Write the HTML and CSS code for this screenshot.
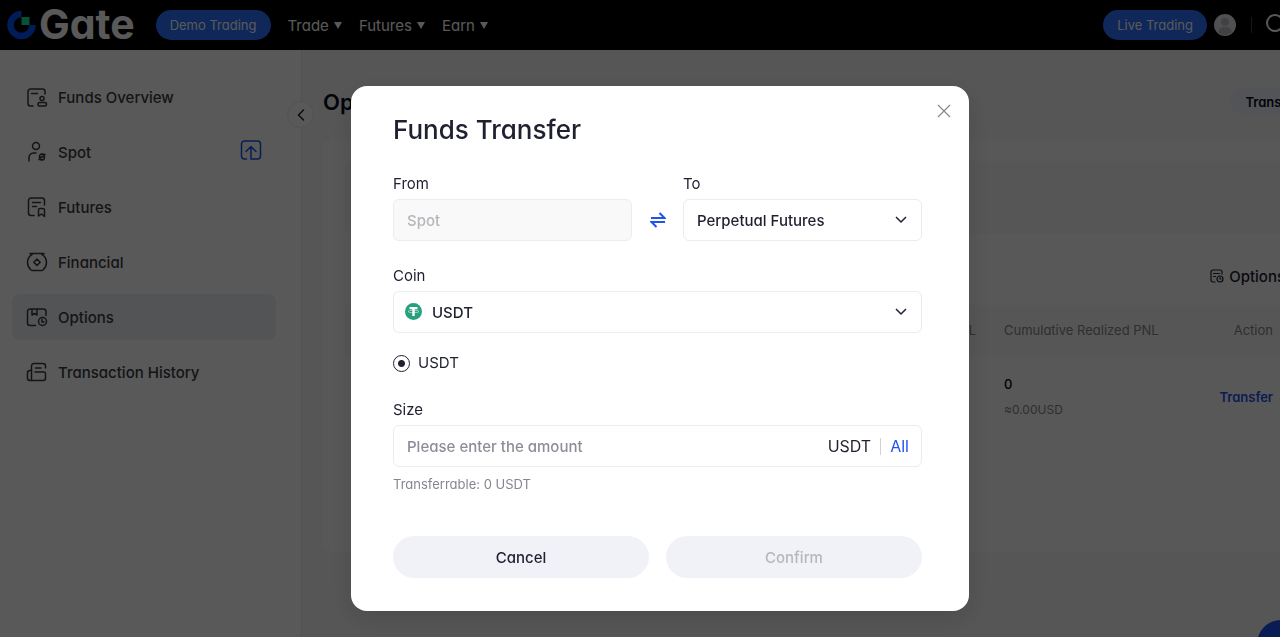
FILE: index.html
```html
<!DOCTYPE html>
<html lang="en">
<head>
  <meta charset="UTF-8">
  <meta name="viewport" content="width=device-width, initial-scale=1.0">
  <title>Options - Gate</title>
  <link rel="stylesheet" href="styles.css">
</head>
<body>
  <div class="page">
    <header class="header">
      <a href="#" class="logo">
        <svg width="29" height="30" viewBox="0 0 29 30">
          <path d="M14.5 4a11 11 0 1 0 11 11" fill="none" stroke="#0055ff" stroke-width="6.5"/>
          <rect x="14.5" y="7" width="8" height="8" fill="#17e5a1"/>
        </svg>
        <span>Gate</span>
      </a>
      <button class="pill">Demo Trading</button>
      <nav class="nav">
        <a href="#">Trade <i class="caret"></i></a>
        <a href="#">Futures <i class="caret"></i></a>
        <a href="#">Earn <i class="caret"></i></a>
      </nav>
      <div class="header-right">
        <button class="pill">Live Trading</button>
        <svg class="avatar" width="22" height="22" viewBox="0 0 22 22">
          <circle cx="11" cy="11" r="11" fill="#e4e6ea"/>
          <circle cx="11" cy="8" r="4" fill="#b9bcc2"/>
          <path d="M4 18c1-4 3-5 7-5s6 1 7 5c-3 4-11 4-14 0z" fill="#b9bcc2"/>
        </svg>
        <span class="divider"></span>
        <svg class="search" width="24" height="24" viewBox="0 0 24 24" fill="none" stroke="#fff" stroke-width="2">
          <circle cx="10" cy="10" r="8"/>
          <path d="M16 16l6 6"/>
        </svg>
      </div>
    </header>

    <div class="body">
      <!-- Sidebar -->
      <aside class="sidebar">
        <a href="#" class="menu-item">
          <svg class="icon" viewBox="0 0 22 22">
            <path d="M7 20H4.500a2.500 2.500 0 0 1-2.500-2.500v-12A2.500 2.500 0 0 1 4.500 3h12A2.500 2.500 0 0 1 19 5.500V8M5.500 7.500h6"/>
            <circle cx="16" cy="12.500" r="2"/>
            <rect x="12" y="16.500" width="8.500" height="3.500" rx="1.500"/>
          </svg>
          <span>Funds Overview</span>
        </a>
        <a href="#" class="menu-item">
          <svg class="icon" viewBox="0 0 22 22">
            <circle cx="10" cy="5" r="3.500"/>
            <path d="M3 20v-3.500A4.500 4.500 0 0 1 7.500 12H10"/>
            <ellipse cx="16" cy="16" rx="2.500" ry="3"/>
            <path d="M13 18.500h3.500M15.500 13.500H19M14.500 16.500l3-1"/>
          </svg>
          <span>Spot</span>
          <svg class="upload" width="22" height="22" viewBox="0 0 22 22">
            <path d="M6.500 20H4.500a3 3 0 0 1-3-3V5a3 3 0 0 1 3-3h13a3 3 0 0 1 3 3v12a3 3 0 0 1-3 3H11V8M6 12.500l5-5 5 5"/>
          </svg>
        </a>
        <a href="#" class="menu-item">
          <svg class="icon" viewBox="0 0 22 22">
            <path d="M8 19.500H5A2.500 2.500 0 0 1 2.500 17V4.500A2.500 2.500 0 0 1 5 2h11a2.500 2.500 0 0 1 2.500 2.500V9M6.500 6.500h8M6.500 10.500h4M12.500 20v-6a1.500 1.500 0 0 1 1.500-1.500h3a1.500 1.500 0 0 1 1.500 1.500v6.500l-3-2.500z"/>
          </svg>
          <span>Futures</span>
        </a>
        <a href="#" class="menu-item">
          <svg class="icon" viewBox="0 0 22 22">
            <path d="M4 2.500h14M6.500 3C4 4.500 1.500 8 1.500 11.500c0 3 1.500 5.500 3.500 7.500q.5.500 1.500.500h9q1 0 1.500-.5c2-2 3.500-4.500 3.500-7.500C20.500 8 18 4.500 15.500 3M11 8l3.200 3.200L11 14.400l-3.200-3.200z"/>
          </svg>
          <span>Financial</span>
        </a>
        <a href="#" class="menu-item active">
          <svg class="icon" viewBox="0 0 22 22">
            <path d="M9.500 19.500H4A2.500 2.500 0 0 1 1.500 17V5.500A2.500 2.500 0 0 1 4 3h13.500A2.500 2.500 0 0 1 20 5.500V9.500M6 3v6l2.500-1.500L11 9V3"/>
            <circle cx="16.500" cy="15.500" r="4"/>
            <path d="M16 13.500v2.500h2"/>
          </svg>
          <span>Options</span>
        </a>
        <a href="#" class="menu-item">
          <svg class="icon" viewBox="0 0 22 22">
            <path d="M5.500 19V5A2.500 2.500 0 0 1 8 2.500h9A2.500 2.500 0 0 1 19.500 5v2M5.500 9.500H4A2.500 2.500 0 0 0 1.500 12v5A2.500 2.500 0 0 0 4 19.500h13a2.500 2.500 0 0 0 2.500-2.500v-4.500A1.500 1.500 0 0 0 18 11H9M9.500 7h5.500"/>
          </svg>
          <span>Transaction History</span>
        </a>
        <button class="collapse" aria-label="Collapse menu">
          <svg width="12" height="12" viewBox="0 0 12 12"><path d="M8.500 1L3.500 6l5 5"/></svg>
        </button>
      </aside>

      <!-- Options account -->
      <main class="main">
        <div class="title-row">
          <h1>Options</h1>
          <button class="transfer-btn">Transfer</button>
        </div>
        <section class="card">
          <div class="summary"></div>
          <div class="card-head">
            <svg class="icon-small" viewBox="0 0 14 14">
              <path d="M5 13H3a2 2 0 0 1-2-2V3a2 2 0 0 1 2-2h7a2 2 0 0 1 2 2v2M3.500 4.500h6M3.500 7.500h2"/>
              <circle cx="10" cy="10" r="3"/>
              <path d="M10 8.500V10h1"/>
            </svg>
            <a href="#">Options</a>
          </div>
          <table class="assets">
            <thead>
              <tr><th class="pnl">PNL</th><th class="realized">Cumulative Realized PNL</th><th class="action">Action</th></tr>
            </thead>
            <tbody>
              <tr>
                <td></td>
                <td class="realized"><b>0</b><small>≈0.00USD</small></td>
                <td class="action"><a href="#">Transfer</a></td>
              </tr>
            </tbody>
          </table>
        </section>
      </main>
    </div>

    <button class="chat" aria-label="Support"></button>

    <!-- Transfer dialog -->
    <div class="overlay">
      <form class="dialog" role="dialog" aria-labelledby="dialog-title">
        <button type="button" class="close" aria-label="Close">
          <svg width="14" height="14" viewBox="0 0 14 14"><path d="M1 1l12 12M13 1L1 13"/></svg>
        </button>
        <h2 id="dialog-title">Funds Transfer</h2>

        <div class="accounts">
          <div class="form-group">
            <label for="from">From</label>
            <input type="text" id="from" class="field" value="Spot" disabled>
          </div>
          <button type="button" class="swap" aria-label="Swap accounts">
            <svg width="16" height="16" viewBox="0 0 16 16"><path d="M1 6h13.500L9.500 1M15 10H1.500l5 5"/></svg>
          </button>
          <div class="form-group">
            <label for="to">To</label>
            <div class="select">
              <select id="to" class="field"><option>Perpetual Futures</option></select>
              <svg class="chevron" width="12" height="8" viewBox="0 0 12 8"><path d="M1 1l5 5 5-5"/></svg>
            </div>
          </div>
        </div>

        <div class="form-group">
          <label for="coin">Coin</label>
          <div class="select">
            <svg class="coin-icon" width="17" height="17" viewBox="0 0 17 17">
              <circle cx="8.500" cy="8.500" r="8.500" fill="#26a17b"/>
              <path d="M4.500 4h8v2.200H9.700V13H7.300V6.200H4.500z" fill="#fff"/>
              <ellipse cx="8.500" cy="8.500" rx="5.500" ry="1.200" fill="none" stroke="#fff" stroke-width=".5"/>
            </svg>
            <select id="coin" class="field coin"><option>USDT</option></select>
            <svg class="chevron" width="12" height="8" viewBox="0 0 12 8"><path d="M1 1l5 5 5-5"/></svg>
          </div>
        </div>

        <label class="radio"><input type="radio" name="unit" checked>USDT</label>

        <div class="form-group">
          <label for="size">Size</label>
          <div class="field amount">
            <input type="text" id="size" placeholder="Please enter the amount">
            <span>USDT</span>
            <button type="button" class="all">All</button>
          </div>
        </div>
        <p class="hint">Transferrable: 0 USDT</p>

        <div class="form-actions">
          <button type="button">Cancel</button>
          <button type="submit" disabled>Confirm</button>
        </div>
      </form>
    </div>
  </div>
</body>
</html>
```
FILE: styles.css
```css
* {
  box-sizing: border-box;
}
body {
  margin: 0;
  overflow: hidden;
  font-family: Inter, "Liberation Sans", sans-serif;
  font-feature-settings: "cv11";
  font-size: 15px;
  color: #1f2030;
}
button, input, select {
  font: inherit;
  font-feature-settings: inherit;
  color: inherit;
}
button {
  padding: 0;
  border: none;
  background: none;
  cursor: pointer;
}
a {
  color: inherit;
  text-decoration: none;
}
svg {
  display: block;
  flex-shrink: 0;
}
/* the page is a little wider than the window */
.page {
  position: relative;
  display: flex;
  flex-direction: column;
  width: calc(100% + 40px);
  min-height: 100vh;
}

/* Header */
.header {
  display: flex;
  align-items: center;
  height: 50px;
  padding-left: 7px;
  background-color: #000;
  color: #fff;
}
.logo {
  display: flex;
  align-items: center;
  gap: 3px;
  margin-right: 21px;
  font-size: 41px;
  font-weight: 700;
  line-height: 48px;
}
.logo span {
  padding-bottom: 2px;
}
.pill {
  height: 30px;
  padding: 0 14px;
  border-radius: 15px;
  background-color: #2b6fff;
  font-size: 13px;
}
.nav {
  display: flex;
  gap: 17px;
  margin-left: 17px;
}
.nav a {
  display: flex;
  align-items: center;
  gap: 5px;
}
.caret {
  border: 4px solid transparent;
  border-top: 7px solid #fff;
  border-bottom: none;
}
.header-right {
  display: flex;
  align-items: center;
  margin-left: auto;
  padding-right: 31px;
}
.avatar {
  margin: 0 15px 0 7px;
}
.divider {
  width: 1px;
  height: 16px;
  margin-right: 13px;
  background-color: #444;
}

/* Sidebar */
.body {
  display: flex;
  flex: 1;
}
.sidebar {
  position: relative;
  display: flex;
  flex-direction: column;
  gap: 9px;
  width: 302px;
  padding: 24px 25px 0 12px;
  border-right: 1px solid #ebebeb;
}
.menu-item {
  display: flex;
  align-items: center;
  gap: 10px;
  height: 46px;
  padding: 0 14px;
  border-radius: 8px;
  color: #3a3b40;
  font-weight: 500;
}
.menu-item.active {
  background-color: #edf1f7;
}
.icon, .icon-small, .upload, .collapse svg {
  fill: none;
  stroke: currentColor;
  stroke-width: 1.5;
  stroke-linecap: round;
  stroke-linejoin: round;
}
.icon-small {
  stroke-width: 1.2;
}
.icon {
  width: 22px;
  height: 22px;
}
.upload {
  margin: 0 0 4px auto;
  color: #1f52f0;
}
.collapse {
  position: absolute;
  top: 51px;
  right: -13px;
  display: flex;
  align-items: center;
  justify-content: center;
  width: 27px;
  height: 27px;
  border: 1px solid #e8e8e8;
  border-radius: 50%;
  background-color: #fff;
}

/* Main */
.main {
  flex: 1;
  padding: 38px 6px 0 21px;
  background-color: #f7f7f7;
}
.title-row {
  display: flex;
  align-items: center;
  justify-content: space-between;
  height: 27px;
  margin-bottom: 25px;
}
h1 {
  margin: 0;
  color: #070a20;
  font-size: 22px;
  font-weight: 600;
}
.transfer-btn {
  height: 27px;
  padding: 0 15px;
  border-radius: 14px;
  background-color: #edf0f9;
  color: #070a20;
  font-size: 13px;
  font-weight: 600;
}
.card {
  min-height: 412px;
  padding: 21px 0 0 22px;
  border-radius: 8px;
  background-color: #fcfcfc;
}
.summary {
  height: 73px;
  border-radius: 8px;
  background-color: #f7f7f7;
}
.card-head {
  display: flex;
  align-items: center;
  justify-content: flex-end;
  gap: 5px;
  height: 71px;
  padding: 13px 29px 0 0;
  font-weight: 500;
}
.icon-small {
  width: 14px;
  height: 14px;
}
.assets {
  width: 100%;
  border-collapse: collapse;
  table-layout: fixed;
  font-size: 13px;
}
.assets th {
  height: 50px;
  padding: 0;
  background-color: #f7f7f7;
  color: #84878f;
  font-weight: 400;
  text-align: left;
}
.assets td {
  height: 84px;
  padding: 0;
}
.assets .pnl {
  padding-right: 28px;
  text-align: right;
}
.assets .realized {
  width: 180px;
}
.assets .action {
  width: 130px;
  padding-right: 41px;
  text-align: right;
}
.realized b, .realized small {
  display: block;
  font-size: 13px;
  line-height: 25px;
}
.realized b {
  color: #000;
  font-weight: 500;
}
.realized small {
  color: #84878f;
  font-size: 12px;
}
td.action {
  color: #1f52f0;
  font-weight: 600;
}
.chat {
  position: fixed;
  right: -25px;
  bottom: -31px;
  width: 48px;
  height: 48px;
  border-radius: 50%;
  background-color: #1f52f0;
}

/* Dialog */
.overlay {
  position: absolute;
  inset: 0;
  display: flex;
  align-items: flex-start;
  justify-content: center;
  padding-top: 86px;
  background-color: rgba(0, 0, 0, 0.65);
}
.dialog {
  position: relative;
  width: 100%;
  max-width: 618px;
  padding: 28px 47px 33px 42px;
  border-radius: 16px;
  background-color: #fff;
  box-shadow: 0 8px 24px rgba(0, 0, 0, 0.15);
}
.close {
  position: absolute;
  top: 18px;
  right: 18px;
}
.close svg {
  fill: none;
  stroke: #84878f;
  stroke-width: 1.2;
}
h2 {
  margin: 0 0 27px;
  font-size: 26px;
  font-weight: 500;
  line-height: 32px;
}
.form-group {
  flex: 1;
  margin-bottom: 24px;
}
.form-group label {
  display: block;
  margin-bottom: 4px;
  line-height: 22px;
}
.accounts {
  display: flex;
  align-items: flex-end;
}
.field {
  width: 100%;
  height: 42px;
  padding: 0 13px;
  border: 1px solid #ebecf0;
  border-radius: 6px;
  background-color: #fff;
  font-weight: 500;
}
.field:disabled {
  background-color: #f9f9f9;
  color: #b5b7bd;
}
.select {
  position: relative;
}
select.field {
  appearance: none;
}
select.coin {
  padding-left: 38px;
}
.chevron {
  position: absolute;
  top: 17px;
  right: 15px;
  fill: none;
  stroke: #1f2030;
  stroke-width: 1.5;
  pointer-events: none;
}
.coin-icon {
  position: absolute;
  top: 12px;
  left: 12px;
}
.swap {
  display: flex;
  align-items: center;
  justify-content: center;
  width: 51px;
  height: 42px;
  margin-bottom: 24px;
}
.swap svg {
  fill: none;
  stroke: #1f52f0;
  stroke-width: 2;
}
.radio {
  display: flex;
  align-items: center;
  gap: 8px;
  margin: -5px 0 25px;
  line-height: 22px;
}
.radio input {
  appearance: none;
  width: 17px;
  height: 17px;
  margin: 0;
  border: 1px solid #1f2030;
  border-radius: 50%;
  background: radial-gradient(circle, #1f2030 3px, #fff 4px);
}
.amount {
  display: flex;
  align-items: center;
  padding-right: 12px;
  font-size: 16px;
  font-weight: 400;
}
.amount input {
  flex: 1;
  min-width: 0;
  padding: 0;
  border: none;
  outline: none;
  font-size: 15px;
  font-weight: 500;
}
.amount input::placeholder {
  color: #8b8e98;
}
.all {
  margin-left: 9px;
  padding-left: 9px;
  border-left: 1px solid #d0d2d8;
  color: #1f52f0;
  line-height: 17px;
}
.hint {
  margin: -16px 0 43px;
  color: #84878f;
  font-size: 13px;
  line-height: 18px;
}
.form-actions {
  display: flex;
  gap: 17px;
}
.form-actions button {
  flex: 1;
  height: 42px;
  border-radius: 21px;
  background-color: #f1f2f7;
  font-weight: 500;
}
.form-actions button:disabled {
  color: #b5b7bd;
}
```
